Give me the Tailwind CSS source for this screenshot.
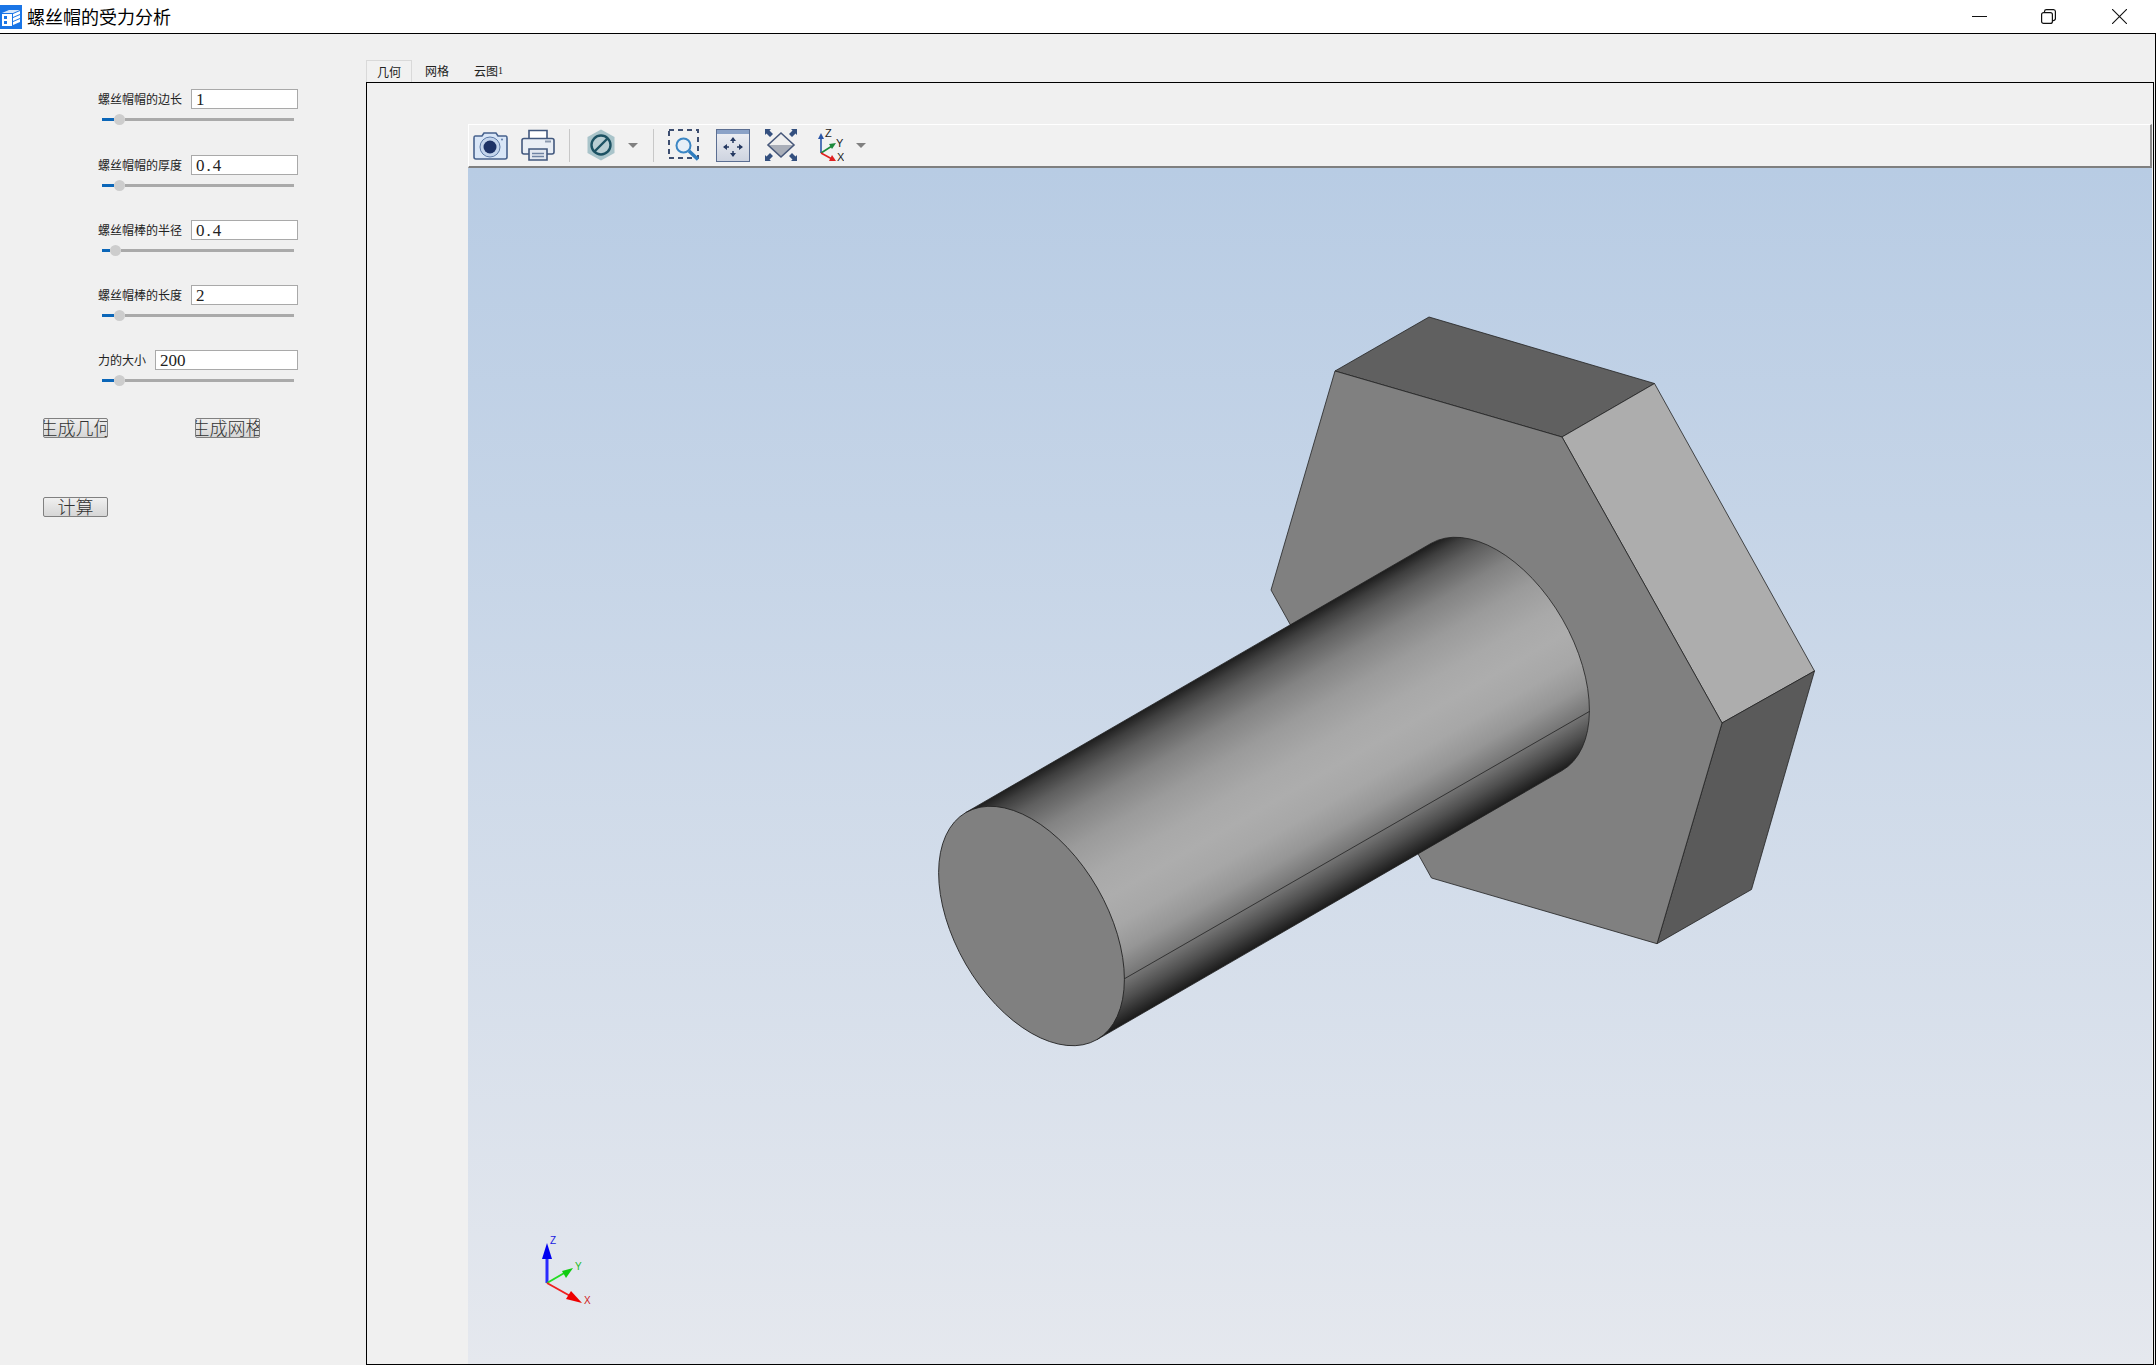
<!DOCTYPE html>
<html lang="zh-CN">
<head>
    <meta charset="UTF-8">
    <title>螺丝帽的受力分析</title>
    <script src="https://cdn.jsdelivr.net/npm/@tailwindcss/browser@4"></script>
</head>
<body class="w-[2156px] h-[1365px] flex flex-col overflow-hidden bg-[#f0f0f0] text-[#222] font-['Noto_Sans_CJK_SC','Liberation_Sans',sans-serif]">
    <!-- Title bar -->
    <header class="h-[34px] shrink-0 flex items-center bg-white border-b border-black">
        <svg class="w-[22px] h-[24px] shrink-0" viewBox="0 0 22 24">
            <rect width="22" height="24" fill="#1a75e6"/>
            <path d="M2 8 L9 5 L20 5 L13 8 Z" fill="#d8e8fb"/>
            <path d="M2 9 H12 V21 H2 Z" fill="#fff"/>
            <path d="M13 9 L20 6 V9 L13 12 Z M13 13 L20 10 V13 L13 16 Z M13 17 L20 14 V17 L13 20 Z" fill="#fff"/>
            <path d="M4 11 H7 V14 H4 Z M4 16 H7 V19 H4 Z" fill="#1a75e6"/>
        </svg>
        <h1 class="ml-[5px] mb-[2px] text-[18px] leading-none font-normal text-black">螺丝帽的受力分析</h1>
        <div class="ml-auto flex items-center">
            <svg class="w-[15px] h-[15px] mr-[54px]" viewBox="0 0 15 15"><path d="M0 7.5 H15" stroke="#111" stroke-width="1"/></svg>
            <svg class="w-[15px] h-[15px] mr-[56px]" viewBox="0 0 15 15" fill="none" stroke="#111" stroke-width="1.2"><rect x="0.6" y="3.6" width="10.8" height="10.8" rx="2"/><path d="M3.5 3.5 V2.5 A2 2 0 0 1 5.5 0.6 H12.5 A2 2 0 0 1 14.4 2.5 V9.5 A2 2 0 0 1 12 11.5"/></svg>
            <svg class="w-[15px] h-[15px] mr-[29px]" viewBox="0 0 15 15" fill="none" stroke="#111" stroke-width="1.1"><path d="M0 0 L15 15 M15 0 L0 15"/></svg>
        </div>
    </header>

    <main class="flex-1 min-h-0 flex border-r border-black">
        <!-- Parameter panel -->
        <aside class="w-[366px] shrink-0 pt-[55px]">
            <div class="h-[66px] ml-[98px] w-[200px]">
                <div class="flex items-center gap-[9px]">
                    <label class="w-[84px] text-[12px] leading-none whitespace-nowrap">螺丝帽帽的边长</label>
                    <input value="1" class="flex-1 min-w-0 h-[20px] pl-[4px] pt-[2px] bg-white border border-[#a9a9a9] font-['Liberation_Serif',serif] text-[17px]">
                </div>
                <div class="flex items-center h-[11px] mt-[5px] ml-[4px] w-[192px]">
                    <div class="w-[12px] h-[3px] bg-[#0b66b8]"></div>
                    <div class="w-[11px] h-[11px] rounded-full bg-[#cdcdcd]"></div>
                    <div class="flex-1 h-[3px] bg-[#aaaaaa]"></div>
                </div>
            </div>
            <div class="h-[65px] ml-[98px] w-[200px]">
                <div class="flex items-center gap-[9px]">
                    <label class="w-[84px] text-[12px] leading-none whitespace-nowrap">螺丝帽帽的厚度</label>
                    <input value="0.4" class="flex-1 min-w-0 h-[20px] pl-[4px] pt-[2px] bg-white border border-[#a9a9a9] font-['Liberation_Serif',serif] text-[17px] tracking-[2px]">
                </div>
                <div class="flex items-center h-[11px] mt-[5px] ml-[4px] w-[192px]">
                    <div class="w-[12px] h-[3px] bg-[#0b66b8]"></div>
                    <div class="w-[11px] h-[11px] rounded-full bg-[#cdcdcd]"></div>
                    <div class="flex-1 h-[3px] bg-[#aaaaaa]"></div>
                </div>
            </div>
            <div class="h-[65px] ml-[98px] w-[200px]">
                <div class="flex items-center gap-[9px]">
                    <label class="w-[84px] text-[12px] leading-none whitespace-nowrap">螺丝帽棒的半径</label>
                    <input value="0.4" class="flex-1 min-w-0 h-[20px] pl-[4px] pt-[2px] bg-white border border-[#a9a9a9] font-['Liberation_Serif',serif] text-[17px] tracking-[2px]">
                </div>
                <div class="flex items-center h-[11px] mt-[5px] ml-[4px] w-[192px]">
                    <div class="w-[8px] h-[3px] bg-[#0b66b8]"></div>
                    <div class="w-[11px] h-[11px] rounded-full bg-[#cdcdcd]"></div>
                    <div class="flex-1 h-[3px] bg-[#aaaaaa]"></div>
                </div>
            </div>
            <div class="h-[65px] ml-[98px] w-[200px]">
                <div class="flex items-center gap-[9px]">
                    <label class="w-[84px] text-[12px] leading-none whitespace-nowrap">螺丝帽棒的长度</label>
                    <input value="2" class="flex-1 min-w-0 h-[20px] pl-[4px] pt-[2px] bg-white border border-[#a9a9a9] font-['Liberation_Serif',serif] text-[17px]">
                </div>
                <div class="flex items-center h-[11px] mt-[5px] ml-[4px] w-[192px]">
                    <div class="w-[12px] h-[3px] bg-[#0b66b8]"></div>
                    <div class="w-[11px] h-[11px] rounded-full bg-[#cdcdcd]"></div>
                    <div class="flex-1 h-[3px] bg-[#aaaaaa]"></div>
                </div>
            </div>
            <div class="h-[68px] ml-[98px] w-[200px]">
                <div class="flex items-center gap-[9px]">
                    <label class="w-[48px] text-[12px] leading-none whitespace-nowrap">力的大小</label>
                    <input value="200" class="flex-1 min-w-0 h-[20px] pl-[4px] pt-[2px] bg-white border border-[#a9a9a9] font-['Liberation_Serif',serif] text-[17px]">
                </div>
                <div class="flex items-center h-[11px] mt-[5px] ml-[4px] w-[192px]">
                    <div class="w-[12px] h-[3px] bg-[#0b66b8]"></div>
                    <div class="w-[11px] h-[11px] rounded-full bg-[#cdcdcd]"></div>
                    <div class="flex-1 h-[3px] bg-[#aaaaaa]"></div>
                </div>
            </div>
            <!-- Buttons -->
            <div class="h-[79px] ml-[43px] flex items-start gap-[87px]">
                <button class="w-[65px] h-[20px] pb-[2px] flex justify-center items-center overflow-hidden whitespace-nowrap rounded-[2px] border border-[#808080] bg-linear-to-b from-[#f0f0f0] to-[#d6d6d6] text-[18px] leading-none font-light text-[#333]">生成几何</button>
                <button class="w-[65px] h-[20px] pb-[2px] flex justify-center items-center overflow-hidden whitespace-nowrap rounded-[2px] border border-[#808080] bg-linear-to-b from-[#f0f0f0] to-[#d6d6d6] text-[18px] leading-none font-light text-[#333]">生成网格</button>
            </div>
            <div class="ml-[43px]">
                <button class="w-[65px] h-[20px] pb-[2px] flex justify-center items-center overflow-hidden whitespace-nowrap rounded-[2px] border border-[#808080] bg-linear-to-b from-[#f0f0f0] to-[#d6d6d6] text-[18px] leading-none font-light text-[#333]">计算</button>
            </div>
        </aside>

        <!-- Tabs and 3D view -->
        <section class="flex-1 min-w-0 flex flex-col pr-[1px]">
            <div class="h-[48px] shrink-0 flex items-end text-[12px] leading-none">
                <div class="w-[46px] h-[22px] flex items-center justify-center bg-[#f1f1f1] border border-b-0 border-[#d9d9d9]">几何</div>
                <div class="w-[50px] h-[22px] flex items-center pl-[13px]">网格</div>
                <div class="h-[22px] flex items-center pl-[12px]">云图<span class="text-[10px] font-['Liberation_Serif',serif]">1</span></div>
            </div>
            <div class="flex-1 min-h-0 flex flex-col border border-black pt-[41px] pl-[101px] pr-[1px]">
                <!-- Toolbar -->
                <div class="h-[44px] shrink-0 flex items-center bg-[#f1f1f1] border-t border-l border-white border-b-2 border-b-[#7f7f7f] border-r-2 border-r-[#8a8a8a]">
                    <svg class="w-[35px] h-[29px] ml-[4px] mb-[1px]" viewBox="0 0 35 29">
                        <path d="M2 5 H9 L11 2 H23 L25 5 H33 Q34 5 34 7 V26 Q34 28 32 28 H3 Q1 28 1 26 V7 Q1 5 2 5 Z" fill="#d9e6f7" stroke="#47628d" stroke-width="1.6"/>
                        <circle cx="17" cy="16" r="10" fill="#c3d4ec" stroke="#5d7aa6"/>
                        <circle cx="17" cy="16" r="6.5" fill="#1d3266"/>
                        <circle cx="29" cy="8.5" r="1" fill="#5d7aa6"/>
                    </svg>
                    <svg class="w-[34px] h-[32px] ml-[13px] mb-[1px]" viewBox="0 0 34 32">
                        <path d="M8 10 V1.5 H26 V10" fill="#fff" stroke="#42587e" stroke-width="1.6"/>
                        <path d="M3 9.5 H31 Q33 9.5 33 11.5 V23 Q33 25 31 25 H3 Q1 25 1 23 V11.5 Q1 9.5 3 9.5 Z" fill="#e9eef5" stroke="#42587e" stroke-width="1.6"/>
                        <path d="M24 12.5 H30" stroke="#8a99ae" stroke-width="2"/>
                        <path d="M8 20 H26 V31 H8 Z" fill="#e3e8f0" stroke="#42587e" stroke-width="1.6"/>
                        <path d="M11 24.5 H23 M11 27.5 H23" stroke="#6f83a3" stroke-width="1.4"/>
                    </svg>
                    <div class="w-[1px] h-[33px] ml-[14px] bg-[#c8c8c8]"></div>
                    <svg class="w-[28px] h-[32px] ml-[17px] mb-[1px]" viewBox="0 0 28 32">
                        <polygon points="14,0.5 27.5,8 27.5,24 14,31.5 0.5,24 0.5,8" fill="#a9c4ca"/>
                        <circle cx="14" cy="16" r="9.5" fill="#b9ced3" stroke="#1d5263" stroke-width="2.4"/>
                        <path d="M7.5 22.5 L20.5 9.5" stroke="#1d5263" stroke-width="2.4"/>
                    </svg>
                    <svg class="w-[10px] h-[5px] ml-[13px]" viewBox="0 0 10 5"><polygon points="0,0 10,0 5,5" fill="#808080"/></svg>
                    <div class="w-[1px] h-[33px] ml-[15px] bg-[#c8c8c8]"></div>
                    <svg class="w-[33px] h-[32px] ml-[14px] mb-[1px]" viewBox="0 0 33 32">
                        <rect x="1" y="1" width="29" height="28" fill="none" stroke="#3d4e70" stroke-width="2" stroke-dasharray="5 4"/>
                        <circle cx="15.5" cy="16.5" r="7" fill="#e6eef7" stroke="#3b86c4" stroke-width="2"/>
                        <path d="M21 22 L30 30.5" stroke="#2f7dbf" stroke-width="3.4"/>
                    </svg>
                    <svg class="w-[34px] h-[33px] ml-[15px] mb-[1px]" viewBox="0 0 34 33">
                        <defs><linearGradient id="pan" x1="0" y1="0" x2="0" y2="1"><stop offset="0" stop-color="#f0f1f5"/><stop offset="1" stop-color="#cdd3df"/></linearGradient></defs>
                        <rect x="0.5" y="0.5" width="33" height="32" fill="url(#pan)" stroke="#5b6e92"/>
                        <rect x="1" y="1" width="32" height="4" fill="#8ba2c7"/>
                        <path d="M17 9 V27 M8 18 H26" stroke="#263a62" stroke-width="1.5" stroke-dasharray="5 8 5"/>
                        <path d="M17 8 L20 12 H14 Z M17 28 L20 24 H14 Z M7 18 L11 15 V21 Z M27 18 L23 15 V21 Z" fill="#263a62"/>
                    </svg>
                    <svg class="w-[32px] h-[32px] ml-[15px] mb-[1px]" viewBox="0 0 32 32">
                        <polygon points="16,4 29,16 3,16" fill="#efefef"/>
                        <polygon points="3,16 29,16 16,28" fill="#a9aeb8"/>
                        <polygon points="16,4 29,16 16,28 3,16" fill="none" stroke="#47587a" stroke-width="1.6"/>
                        <g fill="#34507f">
                            <path d="M0 0 H6 L4.5 1.5 L8 5 L5 8 L1.5 4.5 L0 6 Z"/>
                            <path d="M32 0 H26 L27.5 1.5 L24 5 L27 8 L30.5 4.5 L32 6 Z"/>
                            <path d="M0 32 H6 L4.5 30.5 L8 27 L5 24 L1.5 27.5 L0 26 Z"/>
                            <path d="M32 32 H26 L27.5 30.5 L24 27 L27 24 L30.5 27.5 L32 26 Z"/>
                        </g>
                    </svg>
                    <svg class="w-[28px] h-[34px] ml-[19px] mb-[1px]" viewBox="0 0 28 34" font-family="Liberation Sans" font-size="11" fill="#222">
                        <path d="M5 25 V9" stroke="#2a56a8" stroke-width="1.6"/><polygon points="5,5 8,11 2,11" fill="#2a56a8"/>
                        <path d="M5 25 L16 18" stroke="#1c8a3c" stroke-width="1.6"/><polygon points="20,15 16,21 13,16" fill="#1c8a3c"/>
                        <path d="M5 25 L16 31" stroke="#e02020" stroke-width="1.6"/><polygon points="20,33 13,33 16,27" fill="#e02020"/>
                        <text x="9" y="9">Z</text><text x="20" y="19">Y</text><text x="21" y="33">X</text>
                    </svg>
                    <svg class="w-[10px] h-[5px] ml-[12px]" viewBox="0 0 10 5"><polygon points="0,0 10,0 5,5" fill="#808080"/></svg>
                </div>

                <!-- 3D viewport: coordinates in the viewBox are page pixels -->
                <div class="flex-1 min-h-0 bg-linear-to-b from-[#b8cce4] to-[#e5e8ee]">
                    <svg class="block w-full h-full" viewBox="468 168 1684 1197" preserveAspectRatio="xMinYMin slice">
                        <defs>
                            <linearGradient id="rod" gradientUnits="userSpaceOnUse" x1="966" y1="812.4" x2="1097" y2="1039.6">
                                <stop offset="0" stop-color="#1e1e1e"/>
                                <stop offset="0.04" stop-color="#3e3e3e"/>
                                <stop offset="0.10" stop-color="#5f5f5f"/>
                                <stop offset="0.20" stop-color="#838383"/>
                                <stop offset="0.32" stop-color="#9b9b9b"/>
                                <stop offset="0.45" stop-color="#a9a9a9"/>
                                <stop offset="0.55" stop-color="#adadad"/>
                                <stop offset="0.66" stop-color="#a7a7a7"/>
                                <stop offset="0.76" stop-color="#969696"/>
                                <stop offset="0.85" stop-color="#767676"/>
                                <stop offset="0.92" stop-color="#4f4f4f"/>
                                <stop offset="1" stop-color="#1a1a1a"/>
                            </linearGradient>
                        </defs>
                        <g stroke="#222" stroke-width="0.8" stroke-linejoin="round">
                            <polygon points="1429,317 1654.5,383.5 1562,437 1335,371" fill="#606060"/>
                            <polygon points="1654.5,383.5 1814.5,671 1722,723 1562,437" fill="#adadad"/>
                            <polygon points="1814.5,671 1751.5,889.5 1657,943.7 1722,723" fill="#5a5a5a"/>
                            <polygon points="1335,371 1562,437 1722,723 1657,943.7 1431.5,878 1271,590" fill="#808080"/>
                            <path d="M966,812.4 L1431,543.4 A131.1 76 60 0 1 1562,770.6 L1097,1039.6 Z" fill="url(#rod)"/>
                            <path d="M1124,979 L1589.5,711.4" fill="none"/>
                            <ellipse cx="1031.5" cy="926" rx="131.1" ry="76" transform="rotate(60 1031.5 926)" fill="#808080"/>
                        </g>
                        <!-- Orientation triad -->
                        <g>
                            <path d="M547 1283 V1250" stroke="#2a2aff" stroke-width="3"/>
                            <polygon points="547,1243 552,1259 542,1259" fill="#0000f0"/>
                            <path d="M547 1283 L566 1272" stroke="#22dd22" stroke-width="2"/>
                            <polygon points="573,1268 566,1278 562,1271" fill="#11cc11"/>
                            <path d="M547 1283 L572 1297" stroke="#f02020" stroke-width="2"/>
                            <polygon points="582,1303 566,1299 571,1291" fill="#ee0000"/>
                            <g font-family="Liberation Sans" font-size="10">
                                <text x="550" y="1244" fill="#1a1ae0">Z</text>
                                <text x="575" y="1270" fill="#22bb22">Y</text>
                                <text x="584" y="1304" fill="#d02020">X</text>
                            </g>
                        </g>
                    </svg>
                </div>
            </div>
        </section>
    </main>
</body>
</html>
